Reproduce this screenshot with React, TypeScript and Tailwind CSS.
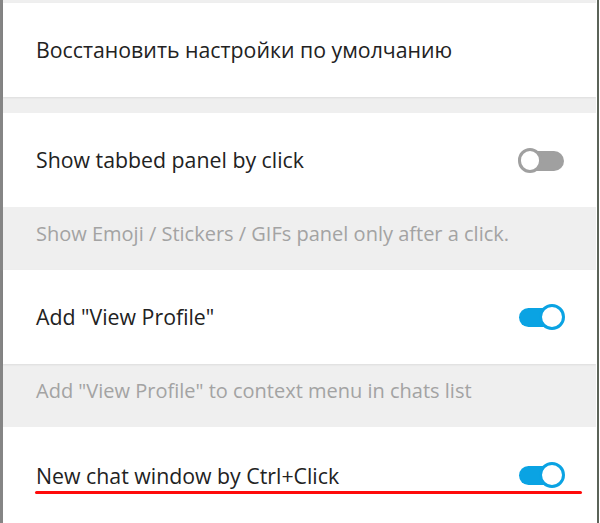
import React from "react";

function Toggle({ on }: { on: boolean }) {
  if (on) {
    return (
      <div className="relative h-[26px] w-[46px] shrink-0">
        <div className="absolute left-0 top-[4px] h-[19px] w-[44px] rounded-full bg-[#0aa3e3]" />
        <div className="absolute right-0 top-0 h-[26px] w-[26px] rounded-full border-[3px] border-[#0aa3e3] bg-white" />
      </div>
    );
  }
  return (
    <div className="relative h-[25px] w-[46px] shrink-0">
      <div className="absolute right-0 top-[3px] h-[20px] w-[42px] rounded-full bg-[#a0a0a0]" />
      <div className="absolute left-0 top-0 h-[25px] w-[24px] rounded-full border-[3px] border-[#a0a0a0] bg-white" />
    </div>
  );
}

export default function App() {
  const font = { fontFamily: '"Open Sans", "Noto Sans", sans-serif' };
  return (
    <div
      className="flex h-[523px] w-[600px] overflow-hidden bg-[#efefef]"
      style={font}
    >
      <div className="w-[3px] shrink-0 bg-[#858585]" />
      <div className="flex min-w-0 flex-1 flex-col pt-[3px]">
        <div className="flex h-[94px] items-center bg-white pl-[33px] text-[21.3px] text-[#222222] shadow-[0_1px_2px_rgba(0,0,0,0.08)]">
          Восстановить настройки по умолчанию
        </div>
        <div className="h-[16px]" />
        <div className="flex h-[94px] items-center justify-between bg-white pl-[33px] pr-[32px] text-[21.3px] text-[#222222]">
          <span>Show tabbed panel by click</span>
          <Toggle on={false} />
        </div>
        <div className="flex h-[63px] items-center whitespace-nowrap pb-[10px] pl-[33px] text-[20px] text-[#a3a3a3]">
          Show Emoji / Stickers / GIFs panel only after a click.
        </div>
        <div className="flex h-[94px] items-center justify-between bg-white pl-[33px] pr-[31px] text-[21.3px] text-[#222222] shadow-[0_1px_2px_rgba(0,0,0,0.08)]">
          <span>Add "View Profile"</span>
          <Toggle on={true} />
        </div>
        <div className="flex h-[63px] items-center whitespace-nowrap pb-[10px] pl-[33px] text-[20px] text-[#a3a3a3]">
          Add "View Profile" to context menu in chats list
        </div>
        <div className="relative flex h-[96px] items-start justify-between bg-white pl-[33px] pr-[31px] pt-[34px] text-[21.3px] text-[#222222]">
          <span className="leading-[30px]">New chat window by Ctrl+Click</span>
          <div className="pt-[1px]">
            <Toggle on={true} />
          </div>
          <div className="absolute left-[32px] top-[64px] h-[3px] w-[547px] rounded-full bg-[#ff0a0a]" />
        </div>
      </div>
      <div className="w-[1px] shrink-0 bg-white" />
      <div className="w-[2px] shrink-0 bg-[#5b6358]" />
      <div className="w-[1px] shrink-0 bg-white" />
    </div>
  );
}
